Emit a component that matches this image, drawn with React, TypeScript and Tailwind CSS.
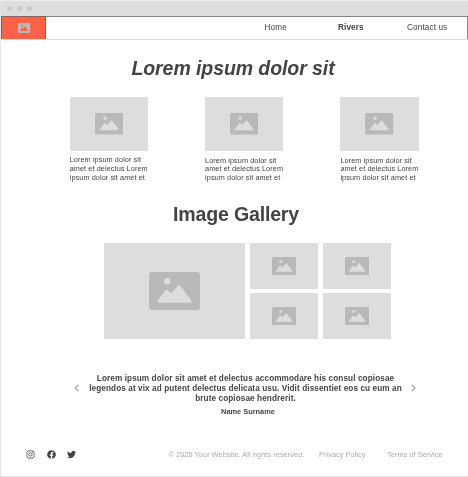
import { FaFacebook, FaInstagram, FaTwitter } from "react-icons/fa";

function Picture({ className, fg = "#b9b9b9", bg = "#dddddd" }: { className: string; fg?: string; bg?: string }) {
  return (
    <svg viewBox="0 0 51 38" preserveAspectRatio="none" className={className}>
      <rect width="51" height="38" rx="3" fill={fg} />
      <circle cx="18.3" cy="9.3" r="3.2" fill={bg} />
      <path d="M10 30.7 Q7.4 30.5 8.8 28.4 L16.6 18 Q17.5 16.9 18.5 18 L22 21.4 L29 13.6 Q30 12.6 31 13.6 L42 28 Q43.2 30.4 41 30.7 Z" fill={bg} />
    </svg>
  );
}

function Card({ lead }: { lead: string }) {
  return (
    <article className="w-[78.4px]">
      <div className="flex h-[54px] items-center justify-center bg-[#dddddd]">
        <Picture className="h-[21.5px] w-[28.3px]" />
      </div>
      <p className={`h-[32px] text-[7.3px] leading-[8.7px] tracking-[0.08px] whitespace-nowrap ${lead}`}>
        Lorem ipsum dolor sit
        <br />
        amet et delectus Lorem
        <br />
        ipsum dolor sit amet et
      </p>
    </article>
  );
}

function Tile() {
  return (
    <div className="flex items-center justify-center bg-[#dddddd]">
      <Picture className="h-[18.3px] w-[24.3px]" />
    </div>
  );
}

function Chevron({ className = "" }: { className?: string }) {
  return (
    <svg viewBox="0 0 5 8" className={`mt-[10px] h-[8px] w-[5px] ${className}`} fill="none" stroke="#999999" strokeWidth="1.1">
      <path d="M4.3 .8 L1 4 L4.3 7.2" />
    </svg>
  );
}

export default function App() {
  return (
    <div className="flex h-[477px] w-[468px] flex-col overflow-hidden border-b border-l border-[#e4e4e4] bg-white font-['Liberation_Sans',Arial,sans-serif] text-[#444444] antialiased will-change-transform">
      <div className="flex h-[16px] shrink-0 items-center gap-[5px] rounded-tl-[3px] border-t border-[#eeeeee] bg-[#dddddd] pl-[6px]">
        <i className="size-[5px] rounded-full bg-[#c9c9c9]" />
        <i className="size-[5px] rounded-full bg-[#c9c9c9]" />
        <i className="size-[5px] rounded-full bg-[#c9c9c9]" />
      </div>
      <header className="flex h-[24px] shrink-0 border-b border-[#dddddd]">
        <div className="flex w-[45px] items-center justify-center border border-b-0 border-[#89645d] bg-[#fa6348]">
          <Picture className="h-[10px] w-[12px]" fg="#b9b9b9" bg="#fa6348" />
        </div>
        <nav className="flex flex-1 border-t border-r border-[#858585] pt-[5px] text-[8.2px] leading-[11px] tracking-[0.12px]">
          <a className="ml-[218.5px] w-[73.5px]">Home</a>
          <a className="w-[69px] font-bold">Rivers</a>
          <a className="whitespace-nowrap">Contact us</a>
        </nav>
      </header>
      <main className="flex flex-col">
        <h1 className="mt-[16px] h-[24px] pr-[3px] text-center text-[19.5px] leading-[24px] font-bold tracking-[-0.08px] italic">Lorem ipsum dolor sit</h1>
        <section className="mt-[17px] flex justify-between pr-[49.2px] pl-[68.7px]">
          <Card lead="pt-[5.3px]" />
          <Card lead="pt-[5.7px]" />
          <Card lead="pt-[5.7px]" />
        </section>
        <h2 className="mt-[19px] h-[24px] pl-[3px] text-center text-[19.6px] leading-[24px] font-bold tracking-[-0.2px]">Image Gallery</h2>
        <section className="mt-[17px] ml-[103px] flex h-[96px] gap-[5px]">
          <div className="flex w-[141px] items-center justify-center bg-[#dddddd]">
            <Picture className="h-[38px] w-[51px]" />
          </div>
          <div className="grid w-[141px] grid-cols-2 grid-rows-2 gap-x-[5px] gap-y-[4px]">
            <Tile />
            <Tile />
            <Tile />
            <Tile />
          </div>
        </section>
        <section className="mt-[35px] ml-[73px] flex w-[342px] items-start justify-between">
          <Chevron />
          <blockquote className="pl-[1px] text-center font-bold whitespace-nowrap">
            <p className="text-[8.2px] leading-[10px] tracking-[0.095px]">
              Lorem ipsum dolor sit amet et delectus accommodare his consul copiosae
              <br />
              legendos at vix ad putent delectus delicata usu. Vidit dissentiet eos cu eum an
              <br />
              brute copiosae hendrerit.
            </p>
            <cite className="mt-[3px] block pl-[5px] text-[7.4px] leading-[9px] not-italic">Name Surname</cite>
          </blockquote>
          <Chevron className="rotate-180" />
        </section>
      </main>
      <footer className="mt-[34px] flex h-[10px] items-center">
        <div className="mb-[1px] ml-[25px] flex w-[142.5px] items-center gap-[11.5px]">
          <FaInstagram className="size-[9px]" />
          <FaFacebook className="size-[9px]" />
          <FaTwitter className="size-[9px]" />
        </div>
        <div className="flex text-[7.3px] leading-[10px] tracking-[0.08px] whitespace-nowrap text-[#aaaaaa]">
          <span className="w-[150.5px]">© 2025 Your Website. All rights reserved.</span>
          <a className="w-[68px]">Privacy Policy</a>
          <a>Terms of Service</a>
        </div>
      </footer>
    </div>
  );
}
